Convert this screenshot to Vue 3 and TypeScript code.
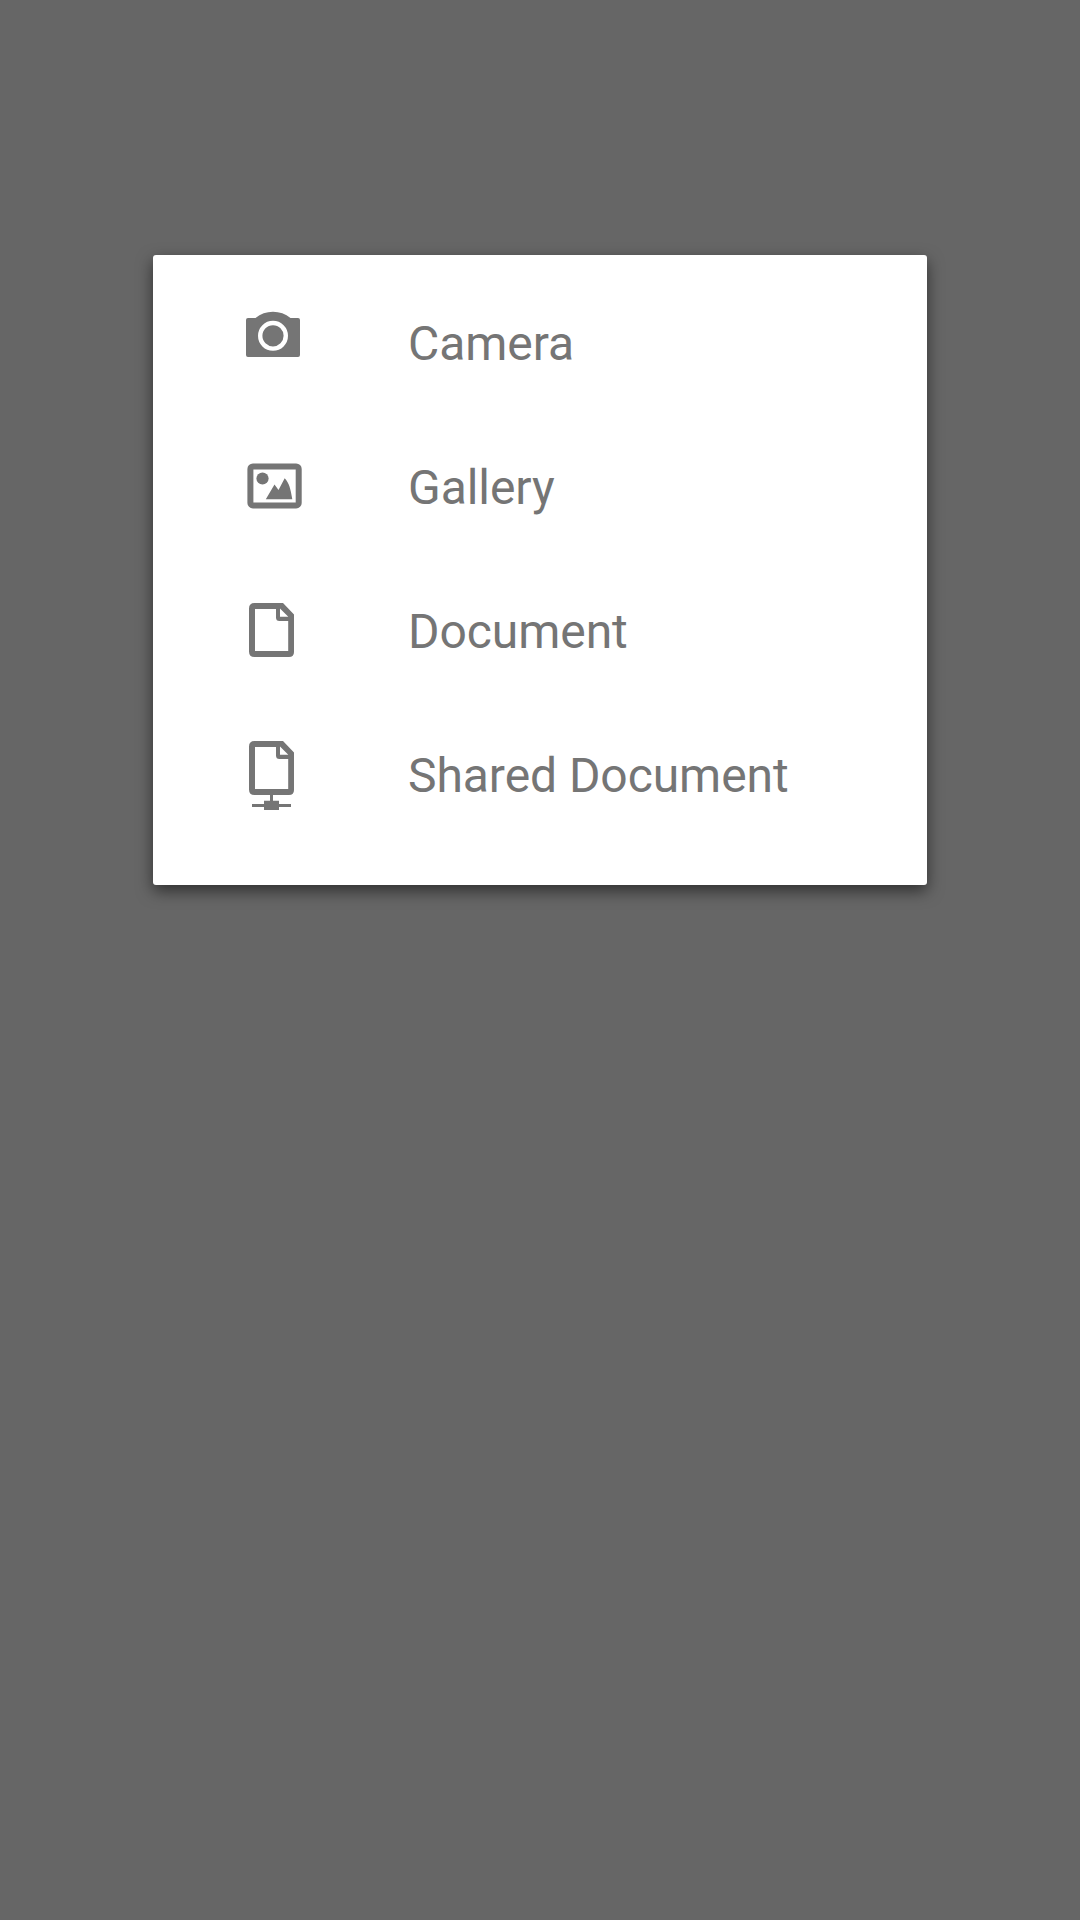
<script setup lang="ts">
type IconName = 'camera' | 'gallery' | 'document' | 'shared'

interface Option {
  icon: IconName
  label: string
}

const options: Option[] = [
  { icon: 'camera', label: 'Camera' },
  { icon: 'gallery', label: 'Gallery' },
  { icon: 'document', label: 'Document' },
  { icon: 'shared', label: 'Shared Document' },
]
</script>

<template>
  <main class="scrim">
    <ul class="dialog">
      <li v-for="option in options" :key="option.icon" class="option">
        <svg class="icon" viewBox="0 0 80 144" aria-hidden="true">
          <template v-if="option.icon === 'camera'">
            <path fill="currentColor" d="M13 36H20.5A27.5 27.5 0 0 1 55.5 36H63Q65 36 65 38V73Q65 75 63 75H13Q11 75 11 73V38Q11 36 13 36Z" />
            <circle cx="38" cy="53.8" r="12.8" fill="none" stroke="#fff" stroke-width="4.4" />
          </template>
          <template v-else-if="option.icon === 'gallery'">
            <rect x="15.4" y="40.4" width="48.3" height="39" rx="2.5" fill="none" stroke="currentColor" stroke-width="6" />
            <circle cx="27.5" cy="52.5" r="6.1" fill="currentColor" />
            <path fill="currentColor" d="M30.8 73.3L39.5 58.6L43.5 64L49.7 52.2C54 57 55.5 62 57.3 73.3Z" />
          </template>
          <template v-else>
            <g :transform="option.icon === 'shared' ? 'translate(0 -6)' : undefined">
              <path fill="currentColor" fill-rule="evenodd" d="M19.5 33H48L59 44.5V82Q59 87 54 87H19.5Q14 87 14 81.5V38.5Q14 33 19.5 33ZM20 39V81H53.2V51H44.5Q41 51 41 47.5V39ZM45 38.5V46.8H53.3Z" />
            </g>
            <path v-if="option.icon === 'shared'" fill="currentColor" d="M35 81H38V86.8H44V90H56V93H44V96H29V93H17V90H29V86.8H35Z" />
          </template>
        </svg>
        <span class="label">{{ option.label }}</span>
      </li>
    </ul>
  </main>
</template>

<style>
body {
  background: #666;
}
</style>

<style scoped>
.scrim {
  box-sizing: border-box;
  min-height: 1920px;
  padding-top: 255px;
  background: #666;
}

.dialog {
  box-sizing: border-box;
  width: 774px;
  margin: 0 auto;
  padding: 27px 0;
  border-radius: 3px;
  list-style: none;
  color: #757575;
  background: #fff;
  box-shadow: 0 6px 16px rgba(0, 0, 0, 0.54);
}

.option {
  display: flex;
  height: 144px;
  padding-left: 82px;
}

.icon {
  flex: none;
  width: 80px;
  height: 144px;
}

.label {
  margin-left: 93px;
  font-family: Roboto, sans-serif;
  font-size: 48px;
  line-height: 124px;
  letter-spacing: -0.06px;
  white-space: nowrap;
}
</style>
